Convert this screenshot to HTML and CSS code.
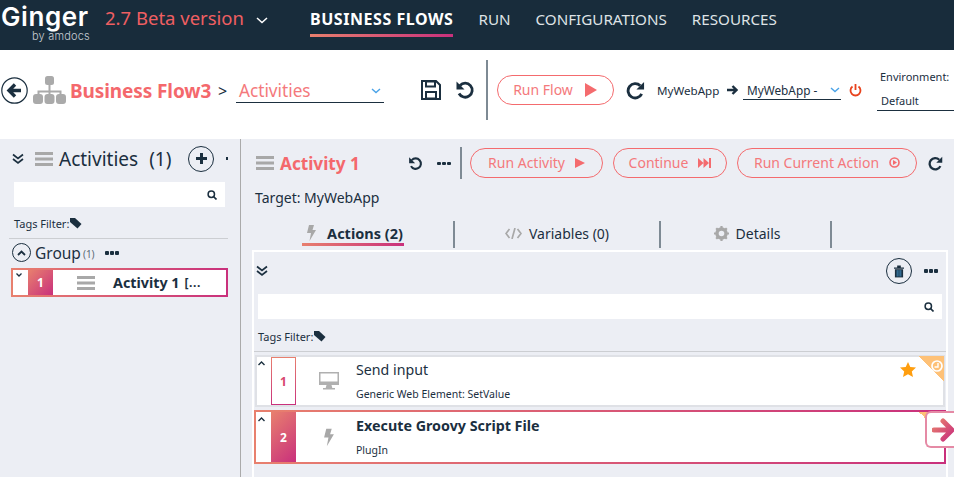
FILE: index.html
```html
<!DOCTYPE html>
<html lang="en">

<head>
    <meta charset="UTF-8">
    <title>Ginger</title>
    <link rel="stylesheet" href="styles.css">
</head>

<body>
    <svg class="defs" width="0" height="0">
        <defs>
            <linearGradient id="pink" x1="0" y1="0" x2="1" y2="1">
                <stop offset="0" stop-color="#e8806e" />
                <stop offset="1" stop-color="#c9307c" />
            </linearGradient>
            <symbol id="chevrons" viewBox="0 0 12 12">
                <path d="M1 1.500l5 4 5-4M1 6l5 4 5-4" fill="none" stroke="#1b2f3f" stroke-width="1.700" />
            </symbol>
            <symbol id="bars" viewBox="0 0 18 14">
                <path d="M0 0h18v3H0zM0 5.500h18v3H0zM0 11h18v3H0z" fill="#a8a8a8" />
            </symbol>
            <symbol id="search" viewBox="0 0 10 10">
                <circle cx="4.300" cy="4.300" r="3.200" fill="none" stroke="#1b2f3f" stroke-width="1.500" />
                <path d="M6.500 6.500l3 3" stroke="#1b2f3f" stroke-width="1.700" />
            </symbol>
            <symbol id="tag" viewBox="0 0 12 11">
                <path d="M0 0h5l6.500 6-4 4.500L0 4z" fill="#1b2f3f" />
            </symbol>
            <symbol id="undo" viewBox="0 0 20 20">
                <path d="M5 5.500a7 7 0 1 1-1 8" fill="none" stroke="#1b2f3f" stroke-width="2.800" />
                <path d="M1.500 1.500v8h8z" fill="#1b2f3f" />
            </symbol>
            <symbol id="redo" viewBox="0 0 20 20">
                <path d="M15 5a7.500 7.500 0 1 0 1.500 8.500" fill="none" stroke="#1b2f3f" stroke-width="3" />
                <path d="M19 1v8h-8z" fill="#1b2f3f" />
            </symbol>
            <symbol id="bolt" viewBox="0 0 11 16">
                <path d="M3 0h5L6.500 5H10L3.500 16 5 8H1z" fill="#a8a8a8" />
            </symbol>
        </defs>
    </svg>

    <header class="topbar">
        <div class="logo">
            <div class="logo-name">Ginger</div>
            <div class="logo-by">by amdocs</div>
        </div>
        <div class="version">2.7 Beta version</div>
        <svg class="version-arrow" width="12" height="7" viewBox="0 0 12 7">
            <path d="M1 1l5 4.500L11 1" fill="none" stroke="#fff" stroke-width="1.500" />
        </svg>
        <nav class="nav">
            <a class="nav-item nav-active">BUSINESS FLOWS</a>
            <a class="nav-item">RUN</a>
            <a class="nav-item">CONFIGURATIONS</a>
            <a class="nav-item">RESOURCES</a>
        </nav>
    </header>

    <section class="toolbar">
        <svg class="back" width="27" height="27" viewBox="0 0 27 27">
            <circle cx="13.500" cy="13.500" r="12.700" fill="#fff" stroke="#1b2f3f" stroke-width="1.200" />
            <path d="M20 13.500H9M14 7.500l-6 6 6 6" fill="none" stroke="#1b2f3f" stroke-width="3.400" />
        </svg>
        <svg class="flow-icon" width="33" height="28" viewBox="0 0 33 28">
            <path d="M16.500 8v8M5.500 20v-4.500h22V20M16.500 15v6" fill="none" stroke="#aaa" stroke-width="2" />
            <rect x="12" y="0" width="9" height="9" rx="2.500" fill="#aaa" />
            <rect x="0" y="18" width="10" height="10" rx="3" fill="#aaa" />
            <rect x="11.500" y="18" width="10" height="10" rx="3" fill="#aaa" />
            <rect x="23" y="18" width="10" height="10" rx="3" fill="#aaa" />
        </svg>
        <h1 class="flow-name">Business Flow3</h1>
        <span class="flow-sep">&gt;</span>
        <div class="select flow-select">
            <span class="flow-select-text">Activities</span>
            <svg width="10" height="6" viewBox="0 0 10 6"><path d="M1 1l4 3.500L9 1" fill="none" stroke="#4aa3e8" stroke-width="1.400" /></svg>
        </div>
        <svg class="save" width="20" height="20" viewBox="0 0 20 20">
            <path d="M1 1h14l4 4v14H1z" fill="none" stroke="#1b2f3f" stroke-width="2" />
            <path d="M5 1.500h9v5H5zM5 12h10v6.500H5z" fill="none" stroke="#1b2f3f" stroke-width="2" />
        </svg>
        <svg class="tool-undo" width="20" height="20"><use href="#undo" /></svg>
        <div class="vline toolbar-line"></div>
        <button class="pill run-flow">Run Flow
            <svg width="14" height="14" viewBox="0 0 14 14"><path d="M1 0l12 7-12 7z" fill="#f46b6e" /></svg>
        </button>
        <svg class="tool-redo" width="19" height="19"><use href="#redo" /></svg>
        <span class="app-name">MyWebApp</span>
        <svg class="app-arrow" width="11" height="10" viewBox="0 0 11 10"><path d="M0 5h8M5.500 1l4 4-4 4" fill="none" stroke="#1b2f3f" stroke-width="2.400" /></svg>
        <div class="select app-select">
            <span>MyWebApp -</span>
            <svg width="10" height="6" viewBox="0 0 10 6"><path d="M1 1l4 3.500L9 1" fill="none" stroke="#4aa3e8" stroke-width="1.400" /></svg>
        </div>
        <svg class="power" width="13" height="13" viewBox="0 0 13 13">
            <path d="M3.500 2.500a5 5 0 1 0 6 0" fill="none" stroke="#e8421c" stroke-width="1.800" />
            <path d="M6.500 0v6" stroke="#e8421c" stroke-width="1.800" />
        </svg>
        <div class="env">
            <div class="env-label">Environment:</div>
            <div class="env-value">Default</div>
        </div>
    </section>

    <main class="workspace">
        <aside class="side">
            <div class="side-head">
                <svg width="12" height="12"><use href="#chevrons" /></svg>
                <svg class="side-bars" width="18" height="14"><use href="#bars" /></svg>
                <span class="side-title">Activities</span>
                <span class="side-count">(1)</span>
                <span class="circle-btn side-add">
                    <svg width="13" height="13" viewBox="0 0 13 13"><path d="M6.500 1v11M1 6.500h11" stroke="#1b2f3f" stroke-width="3" /></svg>
                </span>
                <span class="side-dot"></span>
            </div>
            <div class="searchbox side-search">
                <svg width="10" height="10"><use href="#search" /></svg>
            </div>
            <div class="tags side-tags">Tags Filter:<svg width="12" height="11"><use href="#tag" /></svg></div>
            <div class="side-line"></div>
            <div class="group">
                <span class="circle-btn group-btn">
                    <svg width="9" height="6" viewBox="0 0 9 6"><path d="M1 5l3.500-3.500L8 5" fill="none" stroke="#1b2f3f" stroke-width="1.800" /></svg>
                </span>
                <span class="group-name">Group</span>
                <span class="group-count">(1)</span>
                <span class="dots group-dots"><i></i><i></i><i></i></span>
            </div>
            <div class="activity">
                <div class="activity-inner">
                    <svg class="caret" width="6" height="4" viewBox="0 0 6 4"><path d="M.5.500L3 3 5.500.500" fill="none" stroke="#1b2f3f" stroke-width="1.300" /></svg>
                    <span class="num num-fill activity-num">1</span>
                    <svg class="activity-bars" width="18" height="14"><use href="#bars" /></svg>
                    <span class="activity-name">Activity 1</span>
                    <span class="activity-more">[...</span>
                </div>
            </div>
        </aside>

        <section class="content">
            <div class="content-head">
                <svg width="18" height="14"><use href="#bars" /></svg>
                <h2 class="act-title">Activity 1</h2>
                <svg class="act-undo" width="15" height="15"><use href="#undo" /></svg>
                <span class="dots act-dots"><i></i><i></i><i></i></span>
                <div class="vline act-line"></div>
                <button class="pill run-activity">Run Activity
                    <svg width="10" height="10" viewBox="0 0 10 10"><path d="M0 0l10 5-10 5z" fill="#f46b6e" /></svg>
                </button>
                <button class="pill run-continue">Continue
                    <svg width="13" height="10" viewBox="0 0 13 10"><path d="M0 0l5.500 5L0 10zM5.500 0L11 5l-5.500 5zM11 0h2v10h-2z" fill="#f46b6e" /></svg>
                </button>
                <button class="pill run-current">Run Current Action
                    <svg width="11" height="11" viewBox="0 0 11 11">
                        <circle cx="5.500" cy="5.500" r="4.500" fill="none" stroke="#f46b6e" stroke-width="1.600" />
                        <path d="M4 3l4 2.500L4 8z" fill="#f46b6e" />
                    </svg>
                </button>
                <svg class="act-redo" width="15" height="15"><use href="#redo" /></svg>
            </div>
            <div class="target">Target: MyWebApp</div>
            <div class="tabs">
                <div class="tab tab-actions">
                    <span class="tab-label">
                        <svg width="11" height="16"><use href="#bolt" /></svg>
                        <b>Actions (2)</b>
                    </span>
                </div>
                <div class="tab tab-vars">
                    <svg width="17" height="11" viewBox="0 0 17 11"><path d="M4.500 1L1 5.500 4.500 10M12.500 1L16 5.500 12.500 10M10 0L7 11" fill="none" stroke="#a8a8a8" stroke-width="1.700" /></svg>
                    Variables (0)
                </div>
                <div class="tab tab-details">
                    <svg width="15" height="15" viewBox="0 0 15 15">
                        <circle cx="7.500" cy="7.500" r="4.500" fill="none" stroke="#a8a8a8" stroke-width="3.400" />
                        <path d="M7.500 0v15M0 7.500h15M2.200 2.200l10.600 10.600M12.800 2.200L2.200 12.800" stroke="#a8a8a8" stroke-width="2.200" stroke-dasharray="2.400 10.200" />
                    </svg>
                    Details
                </div>
            </div>
            <div class="panel">
                <div class="panel-head">
                    <svg width="12" height="12"><use href="#chevrons" /></svg>
                    <span class="circle-btn trash">
                        <svg width="10" height="13" viewBox="0 0 11 13">
                            <path d="M0 2h11v1.500H0zM3.500 0h4v2h-4z" fill="#1b2f3f" />
                            <path d="M1 4h9v9H1z" fill="#1b2f3f" />
                            <path d="M3.500 5v7M5.500 5v7M7.500 5v7" stroke="#3f8fc4" stroke-width="1" />
                        </svg>
                    </span>
                    <span class="dots panel-dots"><i></i><i></i><i></i></span>
                </div>
                <div class="searchbox panel-search">
                    <svg width="10" height="10"><use href="#search" /></svg>
                </div>
                <div class="tags panel-tags">Tags Filter:<svg width="12" height="11"><use href="#tag" /></svg></div>
                <div class="panel-line"></div>
                <div class="row row-plain">
                    <svg class="caret row-caret" width="7" height="5" viewBox="0 0 7 5"><path d="M.5 4L3.500 1l3 3" fill="none" stroke="#1b2f3f" stroke-width="1.400" /></svg>
                    <span class="num num-outline">1</span>
                    <svg class="row-icon" width="20" height="18" viewBox="0 0 20 18">
                        <path d="M0 0h20v13H0z" fill="#b0b0b0" />
                        <path d="M1.500 1.500h17v8h-17z" fill="#fff" />
                        <path d="M7.500 13h5l.8 3H16v1.500H4V16h2.700z" fill="#b0b0b0" />
                    </svg>
                    <div class="row-text">
                        <div class="row-title">Send input</div>
                        <div class="row-sub">Generic Web Element: SetValue</div>
                    </div>
                    <svg class="star" width="16" height="15" viewBox="0 0 16 15"><path d="M8 0l2.300 5 5.700.6-4.200 3.800 1.200 5.600L8 12.200 3 15l1.200-5.600L0 5.600 5.700 5z" fill="#ff9e0f" /></svg>
                    <span class="corner">
                        <svg width="12" height="12" viewBox="0 0 12 12">
                            <circle cx="6" cy="6" r="5" fill="none" stroke="#fff" stroke-width="1.700" />
                            <path d="M7 3v4H3.500" fill="none" stroke="#fff" stroke-width="1.400" />
                        </svg>
                    </span>
                </div>
                <div class="row-active">
                    <div class="row-active-inner">
                        <svg class="caret row-caret" width="7" height="5" viewBox="0 0 7 5"><path d="M.5 4L3.500 1l3 3" fill="none" stroke="#1b2f3f" stroke-width="1.400" /></svg>
                        <span class="num num-fill">2</span>
                        <svg class="row-bolt" width="12" height="19"><use href="#bolt" /></svg>
                        <div class="row-text">
                            <div class="row-title row-title-bold">Execute Groovy Script File</div>
                            <div class="row-sub">PlugIn</div>
                        </div>
                        <span class="corner"></span>
                    </div>
                </div>
            </div>
            <div class="next-tab">
                <svg width="24" height="24" viewBox="0 0 24 24">
                    <path d="M2 12h17M11 3l9 9-9 9" fill="none" stroke="url(#pink)" stroke-width="5" stroke-linecap="round" stroke-linejoin="round" />
                </svg>
            </div>
        </section>
    </main>
</body>

</html>
```
FILE: styles.css
```css
* {
    margin: 0;
    padding: 0;
    box-sizing: border-box;
}

html,
body {
    height: 477px;
    overflow: hidden;
}

body {
    display: flex;
    flex-direction: column;
    font-family: "Noto Sans", "Open Sans", sans-serif;
    color: #1b2f3f;
    background: #eceef4;
}

svg {
    flex: none;
    display: block;
}

.defs {
    position: absolute;
}

/* top bar */
.topbar {
    height: 50px;
    flex: none;
    display: flex;
    align-items: flex-start;
    background: #182c3b;
    color: #fff;
}

.logo {
    width: 105px;
    height: 50px;
    padding: 4px 0 0 1px;
    font-family: "Inter", sans-serif;
}

.logo-name {
    font-size: 26px;
    line-height: 25px;
    font-weight: 600;
    letter-spacing: .6px;
}

.logo-by {
    font-size: 11px;
    line-height: 11px;
    font-weight: 300;
    color: #c8ced4;
    text-align: right;
    width: 89px;
    margin-top: 2px;
    letter-spacing: .2px;
}

.version {
    font-size: 18.5px;
    line-height: 36px;
    color: #ef5f62;
    width: 151px;
}

.version-arrow {
    margin-top: 17px;
}

.nav {
    display: flex;
    height: 50px;
    margin-left: 42px;
    gap: 25px;
}

.nav-item {
    font-size: 15.2px;
    color: #dfe3e6;
    line-height: 38px;
    height: 37px;
}

.nav-active {
    font-size: 16px;
    letter-spacing: .55px;
    font-weight: 700;
    color: #fff;
    border-bottom: 3px solid;
    border-image: linear-gradient(90deg, #e8806e, #c9307c) 1;
}

/* toolbar */
.toolbar {
    height: 89px;
    flex: none;
    display: flex;
    align-items: center;
    background: #fff;
    padding: 0 0 9px 1px;
}

.flow-icon {
    margin-left: 5px;
}

.flow-name {
    font-size: 19px;
    font-weight: 700;
    color: #f4686c;
    margin-left: 4px;
    width: 141px;
    flex: none;
    white-space: nowrap;
    letter-spacing: -.1px;
    padding-top: 1px;
}

.flow-sep {
    margin-left: 7px;
    width: 9px;
    flex: none;
    font-size: 16px;
    padding-top: 1px;
}

.select {
    display: flex;
    align-items: center;
    justify-content: space-between;
    flex: none;
    border-bottom: 1px solid #1b2f3f;
}

.flow-select {
    width: 148px;
    height: 25px;
    margin-left: 9px;
    padding: 2px 3px 0;
    font-size: 17.2px;
    color: #f4797c;
}

.save {
    margin-left: 37px;
}

.tool-undo {
    margin-left: 14px;
}

.vline {
    width: 2px;
    flex: none;
    background: #7e8a94;
}

.toolbar-line {
    height: 60px;
    margin-left: 11px;
}

.pill {
    display: flex;
    align-items: center;
    justify-content: center;
    height: 30px;
    padding-bottom: 1px;
    border: 1px solid #f46b6e;
    border-radius: 15px;
    background: transparent;
    color: #f4797c;
    font-family: inherit;
    font-size: 14px;
}

.run-flow {
    width: 117px;
    flex: none;
    margin-left: 9px;
    gap: 11px;
    background: #fff;
}

.tool-redo {
    margin-left: 12px;
}

.app-name {
    font-size: 11.6px;
    margin-left: 12px;
    width: 62px;
    flex: none;
}

.app-arrow {
    margin-left: 8px;
}

.app-select {
    width: 98px;
    height: 20px;
    margin-left: 5px;
    padding: 0 1px 0 4px;
    font-size: 11.8px;
}

.power {
    margin-left: 8px;
}

.env {
    margin-left: 15px;
    width: 90px;
    flex: none;
    font-size: 11px;
}

.env-label {
    line-height: 15px;
    margin-bottom: 8px;
    padding-left: 3px;
}

.env-value {
    border-bottom: 1px solid #1b2f3f;
    line-height: 18px;
    padding-left: 4px;
}

/* left side */
.workspace {
    flex: 1;
    display: flex;
    min-height: 0;
    position: relative;
}

.side {
    width: 241px;
    flex: none;
    border-right: 1px solid #aaa;
    padding: 0 12px 0 9px;
}

.side-head {
    height: 43px;
    display: flex;
    align-items: center;
    padding: 0 0 4px 3px;
}

.side-bars {
    margin-left: 11px;
}

.side-title {
    font-size: 19px;
    margin-left: 6px;
}

.side-count {
    font-size: 19px;
    margin-left: 11px;
}

.circle-btn {
    display: flex;
    align-items: center;
    justify-content: center;
    border-radius: 50%;
    border: 1px solid #1b2f3f;
    flex: none;
}

.side-add {
    width: 26px;
    height: 26px;
    margin-left: 17px;
}

.side-dot {
    width: 2px;
    height: 3px;
    background: #1b2f3f;
    margin-left: 12px;
}

.searchbox {
    height: 25px;
    background: #fff;
    display: flex;
    align-items: center;
    justify-content: flex-end;
    padding-right: 8px;
}

.side-search {
    margin-left: 5px;
    width: 211px;
}

.tags {
    display: flex;
    align-items: center;
    gap: 1px;
    font-size: 11px;
}

.side-tags {
    height: 31px;
    margin-left: 5px;
    padding-top: 2px;
}

.side-line {
    height: 1px;
    background: #ccced2;
}

.group {
    height: 29px;
    display: flex;
    align-items: center;
    padding: 0 0 2px 3px;
}

.group-btn {
    width: 19px;
    height: 19px;
}

.group-name {
    font-size: 15.5px;
    margin-left: 4px;
}

.group-count {
    font-size: 10px;
    margin: 3px 0 0 2px;
    color: #5b6a76;
}

.dots {
    display: flex;
    gap: 1px;
    flex: none;
}

.dots i {
    width: 4px;
    height: 4px;
    background: #1b2f3f;
    border-radius: 1px;
}

.group-dots {
    margin-left: 10px;
}

.activity {
    width: 217px;
    height: 29px;
    margin-left: 2px;
    padding: 2px;
    background: linear-gradient(90deg, #e8806e, #c9307c);
}

.activity-inner {
    height: 25px;
    background: #fff;
    display: flex;
    align-items: center;
    position: relative;
}

.caret {
    position: absolute;
    left: 3px;
    top: 3px;
}

.num {
    display: flex;
    align-items: center;
    justify-content: center;
    flex: none;
    font-size: 12px;
    font-weight: 700;
}

.num-fill {
    background: linear-gradient(135deg, #e8806e, #c9307c);
    color: #fff;
    width: 25px;
    height: 100%;
}

.activity-num {
    margin-left: 15px;
}

.activity-bars {
    margin-left: 24px;
}

.activity-name {
    font-size: 14.3px;
    font-weight: 700;
    margin-left: 18px;
}

.activity-more {
    font-size: 12px;
    font-weight: 700;
    letter-spacing: .6px;
    margin-left: 5px;
}

/* right side */
.content {
    flex: 1;
    min-width: 0;
    position: relative;
}

.content-head {
    height: 48px;
    display: flex;
    align-items: center;
    padding-left: 15px;
}

.act-title {
    font-size: 17.2px;
    font-weight: 700;
    color: #f4686c;
    margin-left: 6px;
    width: 79px;
    flex: none;
    white-space: nowrap;
}

.act-undo {
    margin-left: 49px;
}

.act-dots {
    margin-left: 14px;
    width: 14px;
}

.act-dots i {
    width: 4px;
    height: 3px;
}

.act-line {
    height: 32px;
    margin-left: 9px;
}

.content-head .pill {
    flex: none;
    gap: 10px;
}

.run-activity {
    width: 133px;
    margin-left: 8px;
}

.run-continue {
    width: 114px;
    margin-left: 10px;
}

.run-current {
    width: 180px;
    margin-left: 10px;
}

.act-redo {
    margin-left: 11px;
}

.target {
    height: 22px;
    line-height: 22px;
    font-size: 14px;
    padding-left: 14px;
}

.tabs {
    height: 27px;
    margin-top: 12px;
    display: flex;
    margin-left: 12px;
}

.tab {
    display: flex;
    align-items: center;
    justify-content: center;
    gap: 7px;
    padding-bottom: 2px;
    font-size: 14px;
    border-right: 2px solid #7e8a94;
}

.tab-actions {
    width: 202px;
}

.tab-label {
    display: flex;
    align-items: center;
    gap: 10px;
    height: 25px;
    padding: 1px 1px 0 4px;
    font-size: 14.5px;
    border-bottom: 3px solid;
    border-image: linear-gradient(90deg, #e8806e, #c9307c) 1;
}

.tab-vars {
    width: 206px;
}

.tab-details {
    width: 171px;
    padding-left: 3px;
}

.panel {
    margin: 2px 0 0 11px;
    width: 696px;
    height: 250px;
    border: 2px solid #fff;
    border-bottom: none;
}

.panel-head {
    height: 42px;
    display: flex;
    align-items: center;
    padding: 0 8px 4px 2px;
}

.trash {
    width: 26px;
    height: 26px;
    margin-left: auto;
}

.panel-dots {
    margin-left: 12px;
}

.panel-search {
    margin: 0 4px;
}

.panel-tags {
    height: 32px;
    margin-left: 4px;
    padding-top: 2px;
}

.panel-line {
    height: 1px;
    background: #ccced2;
    margin-bottom: 3px;
}

.row {
    height: 52px;
    margin: 0 1px;
    background: #fff;
    border: 2px solid #dfe1e6;
    display: flex;
    align-items: center;
    position: relative;
}

.row-caret {
    left: 1px;
    top: 4px;
}

.num-outline {
    width: 25px;
    height: 100%;
    margin-left: 14px;
    background: #fff;
    border: 1px solid;
    border-image: linear-gradient(180deg, #e8806e, #c9307c) 1;
    color: #d8486f;
}

.row-icon {
    margin-left: 23px;
}

.row-text {
    margin-left: 17px;
    padding-bottom: 2px;
}

.row-title {
    font-size: 14.2px;
    line-height: 20px;
}

.row-title-bold {
    font-size: 14.3px;
    font-weight: 700;
}

.row-sub {
    font-size: 10.5px;
    line-height: 14px;
    margin-top: 7px;
}

.star {
    position: absolute;
    right: 27px;
    top: 5px;
}

.corner {
    position: absolute;
    right: 0;
    top: 0;
    width: 25px;
    height: 25px;
    background: linear-gradient(45deg, transparent 50%, #fec177 50%);
}

.row .corner {
    right: -1px;
    top: -1px;
}

.corner svg {
    position: absolute;
    right: 1px;
    top: 4px;
}

.row-active {
    height: 54px;
    margin-top: 3px;
    padding: 2px;
    background: linear-gradient(90deg, #e8806e, #c9307c);
}

.row-active-inner {
    height: 50px;
    background: #fff;
    display: flex;
    align-items: center;
    position: relative;
}

.row-active .row-caret {
    left: 2px;
    top: 5px;
}

.row-active .num-fill {
    margin-left: 15px;
}

.row-bolt {
    margin-left: 27px;
}

.row-active .row-text {
    margin-left: 21px;
}

.next-tab {
    position: absolute;
    right: 0;
    top: 272px;
    width: 29px;
    height: 37px;
    background: #fff;
    border: 2px solid #e58aa5;
    border-right: none;
    border-radius: 6px 0 0 6px;
    display: flex;
    align-items: center;
    padding-left: 5px;
}
```
